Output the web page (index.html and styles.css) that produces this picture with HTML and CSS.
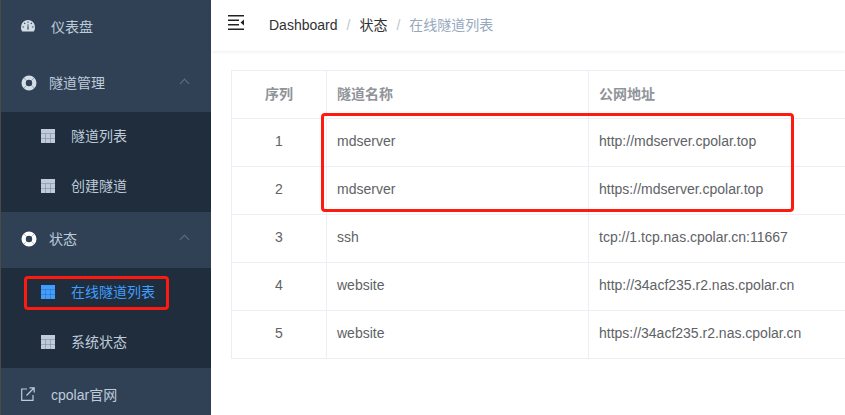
FILE: index.html
```html
<!DOCTYPE html>
<html lang="zh-CN">
<head>
<meta charset="utf-8">
<title>在线隧道列表</title>
<link rel="stylesheet" href="styles.css">
</head>
<body>
<svg class="defs" width="0" height="0" aria-hidden="true">
  <defs>
    <symbol id="grid" viewBox="0 0 14 14">
      <path fill="currentColor" opacity=".55" d="M0 0h14v14H0z"/>
      <path fill="currentColor" d="M0 0h14v4.300H0zM0 4.700h4.300v4.300H0zM4.800 4.700h4.400v4.300H4.800zM9.700 4.700H14v4.300H9.700zM0 9.500h4.300V14H0zM4.800 9.500h4.400V14H4.800zM9.700 9.500H14V14H9.700z"/>
    </symbol>
    <symbol id="ring" viewBox="0 0 16 16">
      <path fill="currentColor" fill-rule="evenodd" d="M8 .5a7.500 7.500 0 1 0 0 15 7.500 7.500 0 0 0 0-15zM8 4.800a3.200 3.200 0 1 1 0 6.400 3.200 3.200 0 0 1 0-6.400z"/>
      <path fill="none" stroke="#304156" stroke-width=".7" stroke-opacity=".5" d="M5.700 5.700 2.700 2.700M10.300 5.700l3-3M5.700 10.300l-3 3M10.300 10.300l3 3"/>
    </symbol>
  </defs>
</svg>
<div class="app">
  <nav class="sidebar">
    <a class="item"><svg class="ico gauge" viewBox="0 0 14 12"><path fill="currentColor" fill-rule="evenodd" d="M7 0a7 7 0 0 0-7 7c0 2 .5 3.500 1.300 4.500h11.400C13.500 10.500 14 9 14 7a7 7 0 0 0-7-7zM6.500 1.500h1v1.600h-1zM2.800 3.200l.8-.8 1 1-.8.8zM1.500 6.500h1.600v1H1.500zM10.900 6.500h1.600v1h-1.600zM9.400 3.400l1-1 .8.8-1 1zM6.300 9.500 6.700 4h.6l.4 5.500z"/></svg><span>仪表盘</span></a>
    <a class="item group"><svg class="ico ring"><use href="#ring"/></svg><span>隧道管理</span><i class="chev"></i></a>
    <div class="sub">
      <a class="subitem"><svg class="grid"><use href="#grid"/></svg><span>隧道列表</span></a>
      <a class="subitem"><svg class="grid"><use href="#grid"/></svg><span>创建隧道</span></a>
    </div>
    <a class="item group"><svg class="ico ring white"><use href="#ring"/></svg><span>状态</span><i class="chev"></i></a>
    <div class="sub">
      <a class="subitem active"><svg class="grid"><use href="#grid"/></svg><span>在线隧道列表</span></a>
      <a class="subitem"><svg class="grid"><use href="#grid"/></svg><span>系统状态</span></a>
    </div>
    <a class="item"><svg class="ico link" viewBox="0 0 14 14"><path fill="none" stroke="currentColor" stroke-width="1.200" d="M6 2H.7v11.300H12V8M5.500 8.500 13 1M8.500.8h4.700v4.700"/></svg><span>cpolar官网</span></a>
  </nav>
  <main class="main">
    <header class="topbar">
      <svg class="burger" viewBox="0 0 16 15"><path fill="#222" d="M0 0h16v1.500H0zM0 4.500h11v1.500H0zM0 9h11v1.500H0zM0 13.500h16V15H0zM16 4.500v6l-3.500-3z"/></svg>
      <ol class="crumbs">
        <li>Dashboard</li><li class="sep">/</li><li>状态</li><li class="sep">/</li><li class="current">在线隧道列表</li>
      </ol>
    </header>
    <section class="content">
      <table class="tunnels">
        <thead>
          <tr><th class="num">序列</th><th class="name">隧道名称</th><th class="addr">公网地址</th></tr>
        </thead>
        <tbody>
          <tr><td class="num">1</td><td>mdserver</td><td>http://mdserver.cpolar.top</td></tr>
          <tr><td class="num">2</td><td>mdserver</td><td>https://mdserver.cpolar.top</td></tr>
          <tr><td class="num">3</td><td>ssh</td><td>tcp://1.tcp.nas.cpolar.cn:11667</td></tr>
          <tr><td class="num">4</td><td>website</td><td>http://34acf235.r2.nas.cpolar.cn</td></tr>
          <tr><td class="num">5</td><td>website</td><td>https://34acf235.r2.nas.cpolar.cn</td></tr>
        </tbody>
      </table>
    </section>
  </main>
  <div class="mark mark-nav"></div>
  <div class="mark mark-table"></div>
</div>
</body>
</html>
```
FILE: styles.css
```css
* { box-sizing: border-box; }
html, body { margin: 0; height: 100%; overflow: hidden; background: #fff; }
body { font-family: "Liberation Sans", "Noto Sans CJK SC", sans-serif; font-size: 14px; }
.defs { position: absolute; }
.app { position: relative; display: flex; width: 845px; height: 415px; overflow: hidden; }

.sidebar { flex: 0 0 211px; height: 415px; background: #304156; border-left: 1px solid #4a4a4a; overflow: hidden; }
.item { display: flex; align-items: center; height: 56px; padding: 0 0 5px 20px; color: #bfcbd9; }
.item.group { position: relative; }
.ico { flex: none; width: 16px; height: 16px; margin-right: 14px; color: #d3dde8; }
.ico.ring { margin-top: 2px; margin-right: 12px; }
.ico.gauge { width: 14px; height: 12px; margin-right: 16px; }
.ico.link { width: 14px; height: 14px; margin-right: 16px; color: #bfcbd9; }
.ico.white { color: #fff; }
.chev { position: absolute; left: 180px; top: 24px; width: 7px; height: 7px; border-top: 1px solid #5f7084; border-left: 1px solid #5f7084; transform: rotate(45deg); }
.sub { background: #1f2d3d; }
.subitem { display: flex; align-items: center; height: 50px; padding: 0 0 4px 40px; color: #bfcbd9; }
.grid { flex: none; width: 14px; height: 14px; margin-top: 2px; margin-right: 16px; color: #bfcbd9; }
.subitem.active, .subitem.active .grid { color: #409eff; }

.main { flex: 1; min-width: 0; display: flex; flex-direction: column; }
.topbar { display: flex; align-items: center; flex: none; height: 51px; padding: 0 0 4px 17px; background: #fff; box-shadow: 0 1px 3px rgba(0, 21, 41, .08); }
.burger { flex: none; width: 16px; height: 15px; margin-bottom: 2px; margin-right: 25px; }
.crumbs { display: flex; align-items: baseline; list-style: none; margin: 0; padding: 0; color: #303133; }
.crumbs .sep { margin: 0 9px; color: #c0c4cc; }
.crumbs .current { color: #97a8be; }

.content { padding: 19px 0 0 20px; }
.tunnels { table-layout: fixed; width: 800px; border-collapse: collapse; color: #606266; }
.tunnels th, .tunnels td { height: 48px; padding: 0 10px 4px; border: 1px solid #ebeef5; text-align: left; font-weight: 400; }
.tunnels th { color: #909399; font-weight: 700; }
.tunnels .num { width: 95px; text-align: center; }
.tunnels .name { width: 262px; }

.mark { position: absolute; border: 3px solid #ff1a10; border-radius: 4px; pointer-events: none; }
.mark-nav { left: 24px; top: 276px; width: 145px; height: 34px; }
.mark-table { left: 321px; top: 113px; width: 473px; height: 99px; }
```
